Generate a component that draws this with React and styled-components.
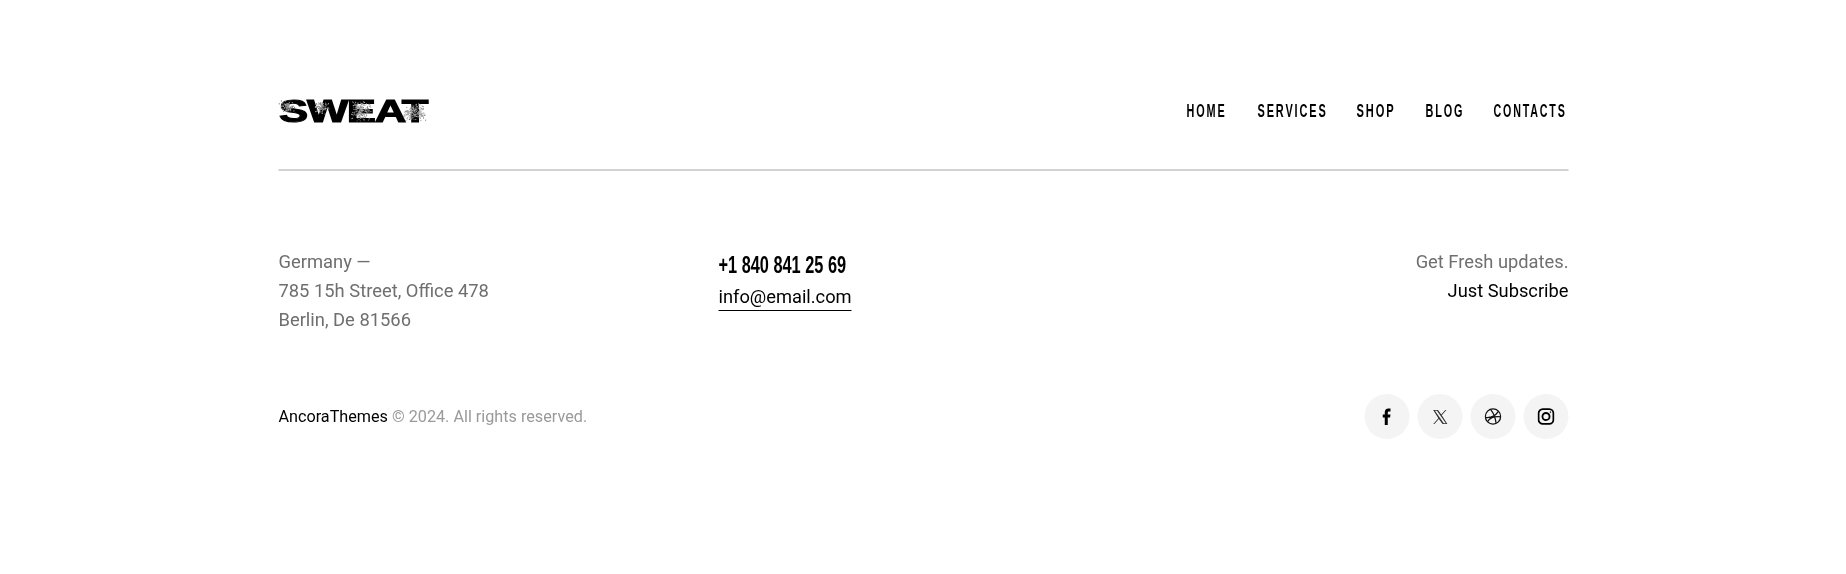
import React from "react";
import styled, { createGlobalStyle } from "styled-components";

const Global = createGlobalStyle`
  html, body { margin: 0; padding: 0; background: #fff; }
  body { font-family: Roboto, "Liberation Sans", sans-serif; }
`;

const Page = styled.div`
  width: 1290px;
  margin: 0 auto;
  padding-top: 99px;
  height: 475px;
  transform: translateX(0.5px);
  will-change: transform;
`;

const TopBar = styled.header`
  display: flex;
  justify-content: space-between;
  align-items: center;
  height: 24px;
  padding-bottom: 46px;
  border-bottom: 2px solid #d2d2d2;
`;

const Logo = styled.div`
  position: relative;
  width: 151px;
  height: 24px;
`;

const LogoWord = styled.span`
  display: block;
  font-family: "Liberation Sans", sans-serif;
  font-weight: 700;
  font-size: 31px;
  line-height: 24px;
  color: #000;
  -webkit-text-stroke: 1.1px #000;
  white-space: nowrap;
  transform-origin: 0 50%;
  transform: translate(0.5px, 0.5px) scale(1.41, 1);
  letter-spacing: -0.9px;
`;

const Speckle = styled.svg`
  position: absolute;
  inset: 0;
`;

const Nav = styled.nav`
  display: flex;
  gap: 30.5px;
  margin-right: 2px;
`;

const NavLink = styled.a`
  display: block;
  width: ${(p) => p.$w}px;
  height: 22px;
`;

const NavText = styled.span`
  display: block;
  font-family: "Liberation Sans", sans-serif;
  font-weight: 700;
  font-size: 17.5px;
  letter-spacing: 3px;
  line-height: 22px;
  color: #000;
  text-transform: uppercase;
  white-space: nowrap;
  transform-origin: 0 50%;
  transform: scaleX(${(p) => p.$sx});
`;

const Columns = styled.section`
  display: grid;
  grid-template-columns: 440px 1fr auto;
  margin-top: 76px;
`;

const Address = styled.div`
  font-size: 18.35px;
  line-height: 29px;
  color: #6f6f6f;
`;

const Contact = styled.div`
  display: flex;
  flex-direction: column;
  align-items: flex-start;
`;

const Phone = styled.div`
  width: 128px;
  height: 29px;
  margin-top: 4px;
`;

const PhoneText = styled.span`
  display: block;
  font-family: "Liberation Sans", sans-serif;
  font-weight: 700;
  font-size: 23.5px;
  line-height: 29px;
  color: #000;
  white-space: nowrap;
  transform-origin: 0 50%;
  transform: scaleX(0.695);
`;

const Email = styled.a`
  font-size: 18.3px;
  line-height: 24px;
  margin-top: 5px;
  padding-bottom: 1px;
  color: #000;
  border-bottom: 1px solid #000;
`;

const Subscribe = styled.div`
  font-size: 18.3px;
  line-height: 29px;
  text-align: right;
  color: #6f6f6f;
`;

const Strong = styled.div`
  color: #000;
`;

const BottomBar = styled.footer`
  display: flex;
  justify-content: space-between;
  align-items: center;
  margin-top: 60px;
`;

const Copy = styled.div`
  font-size: 16.2px;
  color: #9a9a9a;
`;

const Brand = styled.span`
  color: #000;
`;

const Socials = styled.div`
  display: flex;
  gap: 8px;
`;

const Social = styled.a`
  width: 45px;
  height: 45px;
  border-radius: 50%;
  background: #f4f4f4;
  display: flex;
  align-items: center;
  justify-content: center;
  color: #000;
`;

const spots = (() => {
  let s = 11;
  const r = () => ((s = (s * 16807) % 2147483647) / 2147483647);
  const out = [];
  [[0, 1, 17, 12], [35, 1, 15, 14], [72, 1, 20, 22], [124, 4, 24, 18]].forEach(([x, y, w, h]) => {
    for (let i = 0; i < w * h * 0.45; i++) {
      const px = x + (r() + r()) / 2 * w, py = y + (r() + r()) / 2 * h;
      const grey = 90 + Math.floor(r() * 120);
      out.push([px, py, `rgb(${grey},${grey},${grey})`]);
    }
  });
  return out;
})();

const navItems = [
  ["Home", 40, 0.62],
  ["Services", 68.5, 0.625],
  ["Shop", 39, 0.635],
  ["Blog", 37.5, 0.62],
  ["Contacts", 73, 0.61],
];

export default function App() {
  return (
    <Page>
      <Global />
      <TopBar>
        <Logo>
          <LogoWord>SWEAT</LogoWord>
          <Speckle width="151" height="24" viewBox="0 0 151 24">
            {spots.map(([x, y, c], i) => (
              <rect key={i} x={x.toFixed(1)} y={y.toFixed(1)} width="1" height="1" fill={c} />
            ))}
          </Speckle>
        </Logo>
        <Nav>
          {navItems.map(([t, w, sx]) => (
            <NavLink key={t} $w={w}>
              <NavText $sx={sx}>{t}</NavText>
            </NavLink>
          ))}
        </Nav>
      </TopBar>
      <Columns>
        <Address>
          <div>Germany —</div>
          <div>785 15h Street, Office 478</div>
          <div>Berlin, De 81566</div>
        </Address>
        <Contact>
          <Phone>
            <PhoneText>+1 840 841 25 69</PhoneText>
          </Phone>
          <Email>info@email.com</Email>
        </Contact>
        <Subscribe>
          <div>Get Fresh updates.</div>
          <Strong>Just Subscribe</Strong>
        </Subscribe>
      </Columns>
      <BottomBar>
        <Copy>
          <Brand>AncoraThemes</Brand> © 2024. All rights reserved.
        </Copy>
        <Socials>
          <Social>
            <svg width="17" height="17" viewBox="0 0 16 16"><path fill="#000" d="M5.9 16V9H4V6H5.9V4.2C5.9 1.8 7.2.4 9.3.4c.9 0 1.7.1 2 .1v2.8H9.9C8.9 3.3 8.7 3.9 8.7 4.7V6h2.6l-.4 3H8.7v7z" /></svg>
          </Social>
          <Social>
            <svg width="16" height="16" viewBox="0 0 24 24"><path fill="#333" fillRule="evenodd" d="M1 1.5h7.2l5 6.8 6-6.8h1.7l-7 8 8.4 13h-7.2l-5.6-7.6-6.6 7.6H1.2l7.6-8.7zm2.6 1.3 13.3 18.4h3.1L6.7 2.8z" /></svg>
          </Social>
          <Social>
            <svg width="17" height="17" viewBox="0 0 24 24" fill="none" stroke="#111" strokeWidth="1.8"><circle cx="12" cy="12" r="10.8" /><path d="M8.5 2c3.8 4.6 6.6 10.5 7.8 19M1.6 13.5c7 .6 13.4-1.6 18-8.6M4.3 19.5c3-5.6 8-8.4 18.9-6.9" /></svg>
          </Social>
          <Social>
            <svg width="17" height="17" viewBox="0 0 24 24" fill="none" stroke="#000" strokeWidth="2.6"><rect x="1.5" y="1.5" width="21" height="21" rx="6" /><circle cx="12" cy="12" r="5" /><circle cx="18.2" cy="5.8" r="0.6" fill="#000" strokeWidth="1" /></svg>
          </Social>
        </Socials>
      </BottomBar>
    </Page>
  );
}
